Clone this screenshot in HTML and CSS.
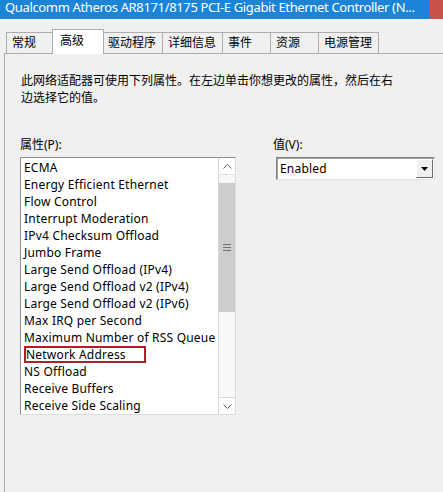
FILE: index.html
```html
<!DOCTYPE html>
<html lang="zh-CN">
  <head>
    <meta charset="UTF-8" />
    <title>Qualcomm Atheros 属性</title>
    <link rel="stylesheet" href="styles.css">
  </head>
  <body>
    <div class="window">
      <div class="titlebar">
        <span class="title">Qualcomm Atheros AR8171/8175 PCI-E Gigabit Ethernet Controller (N...</span>
        <span class="close"></span>
      </div>
      <div class="tabs">
        <div class="tab">常规</div>
        <div class="tab active">高级</div>
        <div class="tab">驱动程序</div>
        <div class="tab">详细信息</div>
        <div class="tab">事件</div>
        <div class="tab">资源</div>
        <div class="tab">电源管理</div>
      </div>
      <div class="panel">
        <p class="intro">此网络适配器可使用下列属性。在左边单击你想更改的属性，然后在右边选择它的值。</p>
        <div class="fields">
          <div class="field prop">
            <label>属性(P):</label>
            <div class="listbox">
              <ul class="items">
                <li>ECMA</li>
                <li>Energy Efficient Ethernet</li>
                <li>Flow Control</li>
                <li>Interrupt Moderation</li>
                <li>IPv4 Checksum Offload</li>
                <li>Jumbo Frame</li>
                <li>Large Send Offload (IPv4)</li>
                <li>Large Send Offload v2 (IPv4)</li>
                <li>Large Send Offload v2 (IPv6)</li>
                <li>Max IRQ per Second</li>
                <li>Maximum Number of RSS Queue</li>
                <li><span class="marked">Network Address</span></li>
                <li>NS Offload</li>
                <li>Receive Buffers</li>
                <li>Receive Side Scaling</li>
              </ul>
              <div class="scrollbar">
                <div class="sb-btn">
                  <svg width="9" height="5" viewBox="0 0 9 5"><polyline points="0.5,4.5 4.5,0.5 8.5,4.5" fill="none" stroke="#606060" stroke-width="1"/></svg>
                </div>
                <div class="sb-track">
                  <div class="thumb">
                    <svg width="8" height="7" viewBox="0 0 8 7"><path d="M0 0.5H8M0 3.5H8M0 6.5H8" stroke="#707070" stroke-width="1"/></svg>
                  </div>
                </div>
                <div class="sb-btn down">
                  <svg width="9" height="5" viewBox="0 0 9 5"><polyline points="0.5,0.5 4.5,4.5 8.5,0.5" fill="none" stroke="#606060" stroke-width="1"/></svg>
                </div>
              </div>
            </div>
          </div>
          <div class="field value">
            <label>值(V):</label>
            <div class="combo">
              <span class="combo-text">Enabled</span>
              <span class="drop">
                <svg width="7" height="4" viewBox="0 0 7 4"><polygon points="0,0 7,0 3.5,4" fill="#000"/></svg>
              </span>
            </div>
          </div>
        </div>
      </div>
    </div>
  </body>
</html>
```

FILE: styles.css
```css
* {
  margin: 0;
  padding: 0;
  box-sizing: border-box;
}
body {
  background-color: #f0f0f0;
  font-family: "Noto Sans", "Noto Sans CJK SC", sans-serif;
  font-size: 12px;
  color: #000;
  overflow: hidden;
}
.window {
  height: 100vh;
  display: flex;
  flex-direction: column;
}
.titlebar {
  height: 19px;
  background-color: #1b84d7;
  display: flex;
  justify-content: space-between;
}
.title {
  color: #fff;
  font-size: 13px;
  line-height: 14px;
  letter-spacing: -0.35px;
  padding-left: 5px;
  white-space: nowrap;
}
.close {
  width: 13px;
  flex-shrink: 0;
  background-color: #c9524b;
}
.tabs {
  height: 34px;
  display: flex;
  align-items: flex-end;
  padding-left: 6px;
}
.tab {
  min-width: 48px;
  height: 21px;
  padding: 0 6px 0 5px;
  border: 1px solid #adadad;
  border-bottom: none;
  border-right: none;
  line-height: 20px;
  background-color: #f0f0f0;
  white-space: nowrap;
}
.tab:last-child {
  border-right: 1px solid #adadad;
}
.tab.active {
  position: relative;
  z-index: 1;
  min-width: 52px;
  height: 25px;
  margin: 0 -2px -1px;
  padding-left: 7px;
  border-right: 1px solid #adadad;
  line-height: 22px;
  background-color: #fff;
}
.panel {
  flex: 1;
  margin-left: 4px;
  border-top: 1px solid #adadad;
  border-left: 1px solid #adadad;
  padding: 18px 0 0 15px;
}
.intro {
  width: 376px;
  padding-left: 1px;
  line-height: 17px;
}
.fields {
  display: flex;
  margin-top: 30px;
}
.field label {
  display: block;
  line-height: 17px;
}
.prop {
  width: 216px;
}
.value {
  margin-left: 37px;
}
.listbox {
  display: flex;
  height: 258px;
  margin-top: 4px;
  background-color: #fff;
  border: 1px solid;
  border-color: #8e8f8f #dcdcdc #dcdcdc #8e8f8f;
}
.items {
  flex: 1;
  list-style: none;
  padding: 1px 0 0 3px;
  letter-spacing: 0.2px;
  overflow: hidden;
}
.items li {
  height: 17px;
  line-height: 17px;
  white-space: nowrap;
}
.marked {
  display: inline-block;
  width: 122px;
  height: 17px;
  line-height: 13px;
  border: 2px solid #ae1f26;
}
.scrollbar {
  width: 17px;
  display: flex;
  flex-direction: column;
  border-left: 1px solid #d6d6d6;
  background-color: #f8f8f8;
}
.sb-btn {
  height: 17px;
  display: flex;
  align-items: center;
  justify-content: center;
  background-color: #fff;
  border-bottom: 1px solid #e2e2e2;
}
.sb-btn.down {
  border-bottom: none;
  border-top: 1px solid #d6d6d6;
}
.sb-track {
  flex: 1;
  padding-top: 8px;
}
.thumb {
  height: 129px;
  display: flex;
  align-items: center;
  justify-content: center;
  background-color: #cdcdcd;
}
.combo {
  display: flex;
  width: 159px;
  height: 23px;
  margin: 4px 0 0 3px;
  background-color: #fff;
  border: 1px solid;
  border-color: #828282 #e3e3e3 #e3e3e3 #828282;
  box-shadow: inset 1px 1px 0 #a0a0a0;
}
.combo-text {
  flex: 1;
  padding-left: 3px;
  line-height: 21px;
  letter-spacing: 0.2px;
}
.drop {
  width: 17px;
  display: flex;
  align-items: center;
  justify-content: center;
  margin: 1px 1px 1px 0;
  background-color: #f0f0f0;
  border: 1px solid;
  border-color: #fff #696969 #696969 #fff;
}
```
